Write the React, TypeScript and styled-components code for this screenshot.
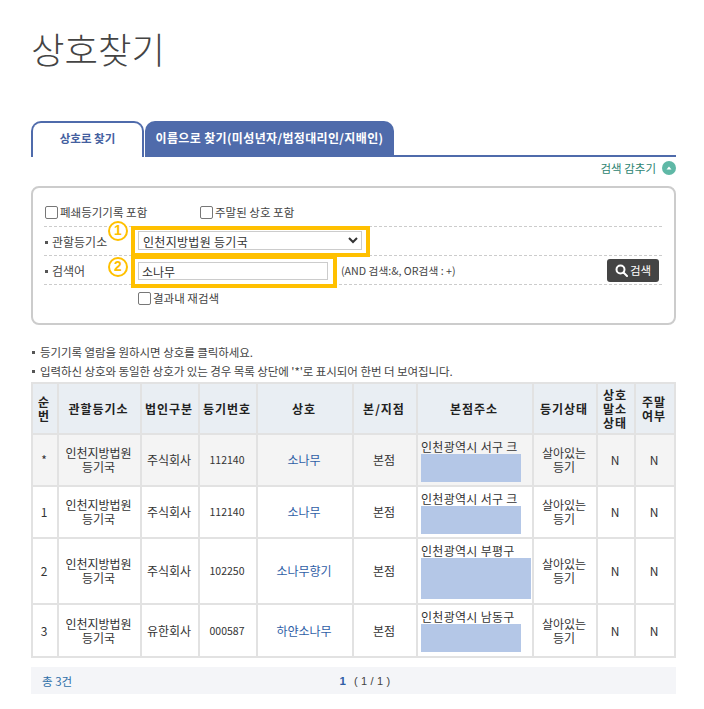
import React from "react";
import styled, { createGlobalStyle } from "styled-components";

const Global = createGlobalStyle`
  html, body { margin: 0; padding: 0; background: #fff; }
  body { font-family: "Noto Sans CJK KR", "Noto Sans", sans-serif; font-size: 12px; color: #333; }
  * { box-sizing: border-box; }
`;

const Page = styled.div`
  width: 704px;
  padding: 24px 28px 15px 31px;
`;
const Title = styled.h1`
  margin: 0;
  height: 97px;
  font-size: 36.4px;
  line-height: 48px;
  font-weight: 300;
  color: #444;
`;
const TabBar = styled.div`
  display: flex;
  height: 36px;
`;
const ActiveTab = styled.div`
  width: 113px;
  border: 2px solid #4f6bab;
  border-bottom: 0;
  border-radius: 10px 10px 0 0;
  text-align: center;
  font-size: 11.5px;
  font-weight: 700;
  line-height: 30px;
  color: #44609f;
`;
const OtherTab = styled.div`
  width: 249px;
  margin-left: 1px;
  background: #4f6bab;
  border-radius: 10px 10px 0 0;
  text-align: center;
  font-size: 12px;
  font-weight: 700;
  line-height: 33px;
  color: #fff;
  letter-spacing: 0.35px;
  white-space: nowrap;
`;
const TabLine = styled.div`
  flex: 1;
  border-bottom: 2px solid #4f6bab;
`;
const ToggleRow = styled.div`
  display: flex;
  justify-content: flex-end;
  align-items: center;
  gap: 6px;
  height: 20px;
  margin-top: 1px;
  font-size: 11.5px;
  color: #2d8471;
`;
const ToggleIcon = styled.svg`
  width: 14px;
  height: 14px;
`;
const SearchBox = styled.section`
  height: 139px;
  width: 645px;
  margin-top: 8px;
  padding: 10px 12px 0 11px;
  border: 2px solid #ccc;
  border-radius: 8px;
`;
const CheckRow = styled.div`
  display: flex;
  height: 29px;
  align-items: center;
  border-bottom: 1px dashed #ccc;
  padding-left: 1px;
`;
const CheckLabel = styled.label<{ $width?: number }>`
  display: flex;
  align-items: center;
  gap: 2px;
  width: ${(p) => (p.$width ? `${p.$width}px` : "auto")};
  font-size: 11.5px;
  color: #444;
`;
const Box = styled.input`
  appearance: none;
  width: 13px;
  height: 13px;
  margin: 0;
  border: 1px solid #777;
  border-radius: 2px;
  background: #fff;
`;
const FieldRow = styled.div`
  display: flex;
  height: 29px;
  align-items: center;
  border-bottom: 1px dashed #ccc;
  position: relative;
`;
const FieldLabel = styled.div`
  width: 87px;
  font-size: 12px;
  color: #444;
  &::before {
    content: "";
    display: inline-block;
    width: 3px;
    height: 3px;
    margin: 0 4px 3px 1px;
    background: #555;
  }
`;
const SelectFrame = styled.div`
  flex: none;
  width: 239px;
  height: 31px;
  padding: 1px 0 0 3px;
  border: 4px solid #ffc000;
`;
const Select = styled.select`
  display: block;
  width: 224px;
  height: 19px;
  padding: 0;
  border: 1px solid #ccc;
  background: #fff;
  font-family: inherit;
  font-size: 12px;
  letter-spacing: 0.3px;
  color: #333;
  border-radius: 0;
`;
const InputFrame = styled.div`
  flex: none;
  width: 206px;
  height: 33px;
  margin-top: 3px;
  padding: 3px 0 0 3px;
  border: 4px solid #ffc000;
`;
const Input = styled.input`
  display: block;
  width: 190px;
  height: 18px;
  padding: 0 3px;
  border: 1px solid #ccc;
  font-family: inherit;
  font-size: 12px;
  color: #333;
  outline: none;
`;
const Hint = styled.span`
  margin-left: 4px;
  font-size: 10.7px;
  color: #444;
`;
const SearchButton = styled.button`
  display: flex;
  align-items: center;
  justify-content: center;
  gap: 2px;
  width: 52px;
  height: 23px;
  margin-left: auto;
  margin-right: 3px;
  padding: 0;
  border: 0;
  border-radius: 3px;
  background: #444;
  color: #fff;
  font-family: inherit;
  font-size: 11.5px;
`;
const Badge = styled.span<{ $top: number }>`
  position: absolute;
  left: 64px;
  top: ${(p) => p.$top}px;
  width: 20px;
  height: 20px;
  border: 2.5px solid #ffc000;
  border-radius: 50%;
  background: #fff;
  color: #ffc000;
  font-family: "Liberation Sans", sans-serif;
  font-size: 14px;
  font-weight: 700;
  line-height: 15px;
  text-align: center;
`;
const RetryRow = styled.div`
  padding: 5px 0 0 94px;
`;
const Notes = styled.ul`
  margin: 18px 0 0;
  padding: 0;
  list-style: none;
`;
const Note = styled.li`
  height: 19px;
  font-size: 11.5px;
  line-height: 19px;
  color: #444;
  letter-spacing: -0.07px;
  white-space: nowrap;
  &::before {
    content: "";
    display: inline-block;
    width: 3px;
    height: 3px;
    margin: 0 5px 3px 1px;
    background: #555;
  }
`;
const Table = styled.table`
  width: 643px;
  margin-top: 1px;
  table-layout: fixed;
  border-collapse: collapse;
  border-bottom: 2px solid #ccc;
  td, th { border: 2px solid #e2e2e2; padding: 0 2px 0 0; text-align: center; font-size: 12px; line-height: 14px; }
`;
const Th = styled.th`
  height: 51px;
  background: #e9eef3;
  color: #222;
  font-weight: 700;
  letter-spacing: 1px;
`;
const Tr = styled.tr<{ $height: number; $shade?: boolean }>`
  height: ${(p) => p.$height}px;
  background: ${(p) => (p.$shade ? "#f4f4f4" : "#fff")};
`;
const NameLink = styled.a`
  color: #2f5ea6;
  text-decoration: none;
`;
const RegCell = styled.td`
  && { font-size: 10.5px; }
`;
const AddressCell = styled.td`
  && { text-align: left; vertical-align: top; padding: 5px 2px 0 3px; line-height: 14px; letter-spacing: 0.3px; }
  white-space: nowrap;
`;
const Redaction = styled.div<{ $w: number; $h: number }>`
  width: ${(p) => p.$w}px;
  height: ${(p) => p.$h}px;
  background: #b4c7e7;
`;
const Footer = styled.div`
  position: relative;
  display: flex;
  align-items: center;
  justify-content: center;
  width: 645px;
  height: 27px;
  margin-top: 9px;
  padding-left: 26px;
  background: #f4f5f8;
  font-size: 11.5px;
  color: #444;
`;
const Total = styled.span`
  position: absolute;
  left: 11px;
  color: #2f6fa8;
`;
const Current = styled.b`
  color: #2f5ea6;
  margin-right: 8px;
  font-family: "Liberation Sans", sans-serif;
`;
const Pages = styled.span`
  letter-spacing: 3.4px;
  font-family: "Liberation Sans", sans-serif;
  font-size: 11px;
`;

const widths = [26, 83, 58, 58, 96, 64, 116, 64, 38, 40];
const heads = [<>순<br />번</>, "관할등기소", "법인구분", "등기번호", "상호", "본/지점", "본점주소", "등기상태", <>상호<br />말소<br />상태</>, <>주말<br />여부</>];

const rows = [
  { no: "*", kind: "주식회사", reg: "112140", name: "소나무", addr: "인천광역시 서구 크", w: 100, h: 28, rh: 52, shade: true },
  { no: "1", kind: "주식회사", reg: "112140", name: "소나무", addr: "인천광역시 서구 크", w: 100, h: 28, rh: 52, shade: false },
  { no: "2", kind: "주식회사", reg: "102250", name: "소나무향기", addr: "인천광역시 부평구", w: 110, h: 41, rh: 66, shade: false },
  { no: "3", kind: "유한회사", reg: "000587", name: "하얀소나무", addr: "인천광역시 남동구", w: 100, h: 28, rh: 53, shade: false },
];

export default function App() {
  return (
    <Page>
      <Global />
      <Title>상호찾기</Title>
      <TabBar>
        <ActiveTab>상호로 찾기</ActiveTab>
        <OtherTab>이름으로 찾기(미성년자/법정대리인/지배인)</OtherTab>
        <TabLine />
      </TabBar>
      <ToggleRow>
        검색 감추기
        <ToggleIcon viewBox="0 0 14 14">
          <circle cx="7" cy="7" r="7" fill="#5fb8a6" />
          <path d="M4.5 8.5 L7 5.5 L9.5 8.5 Z" fill="#fff" />
        </ToggleIcon>
      </ToggleRow>
      <SearchBox>
        <CheckRow>
          <CheckLabel $width={155}><Box type="checkbox" />폐쇄등기기록 포함</CheckLabel>
          <CheckLabel><Box type="checkbox" />주말된 상호 포함</CheckLabel>
        </CheckRow>
        <FieldRow>
          <FieldLabel>관할등기소</FieldLabel>
          <SelectFrame>
            <Select defaultValue="a"><option value="a">인천지방법원 등기국</option></Select>
          </SelectFrame>
          <Badge $top={-6}>1</Badge>
        </FieldRow>
        <FieldRow>
          <FieldLabel>검색어</FieldLabel>
          <InputFrame><Input defaultValue="소나무" /></InputFrame>
          <Hint>(AND 검색:&amp;, OR검색 : +)</Hint>
          <SearchButton>
            <svg width="13" height="13" viewBox="0 0 13 13" fill="none" stroke="#fff" strokeWidth="2">
              <circle cx="5.5" cy="5.5" r="4" />
              <path d="M8.5 8.5 L12 12" strokeLinecap="round" />
            </svg>
            검색
          </SearchButton>
          <Badge $top={1}>2</Badge>
        </FieldRow>
        <RetryRow>
          <CheckLabel><Box type="checkbox" />결과내 재검색</CheckLabel>
        </RetryRow>
      </SearchBox>
      <Notes>
        <Note>등기기록 열람을 원하시면 상호를 클릭하세요.</Note>
        <Note>입력하신 상호와 동일한 상호가 있는 경우 목록 상단에 '*'로 표시되어 한번 더 보여집니다.</Note>
      </Notes>
      <Table>
        <colgroup>
          {widths.map((w, i) => <col key={i} style={{ width: w }} />)}
        </colgroup>
        <thead>
          <tr>{heads.map((h, i) => <Th key={i}>{h}</Th>)}</tr>
        </thead>
        <tbody>
          {rows.map((r) => (
            <Tr key={r.no} $height={r.rh} $shade={r.shade}>
              <td>{r.no}</td>
              <td>인천지방법원<br />등기국</td>
              <td>{r.kind}</td>
              <RegCell>{r.reg}</RegCell>
              <td><NameLink href="#">{r.name}</NameLink></td>
              <td>본점</td>
              <AddressCell>{r.addr}<Redaction $w={r.w} $h={r.h} /></AddressCell>
              <td>살아있는<br />등기</td>
              <td>N</td>
              <td>N</td>
            </Tr>
          ))}
        </tbody>
      </Table>
      <Footer>
        <Total>총 3건</Total>
        <Current>1</Current>
        <Pages>(1/1)</Pages>
      </Footer>
    </Page>
  );
}
